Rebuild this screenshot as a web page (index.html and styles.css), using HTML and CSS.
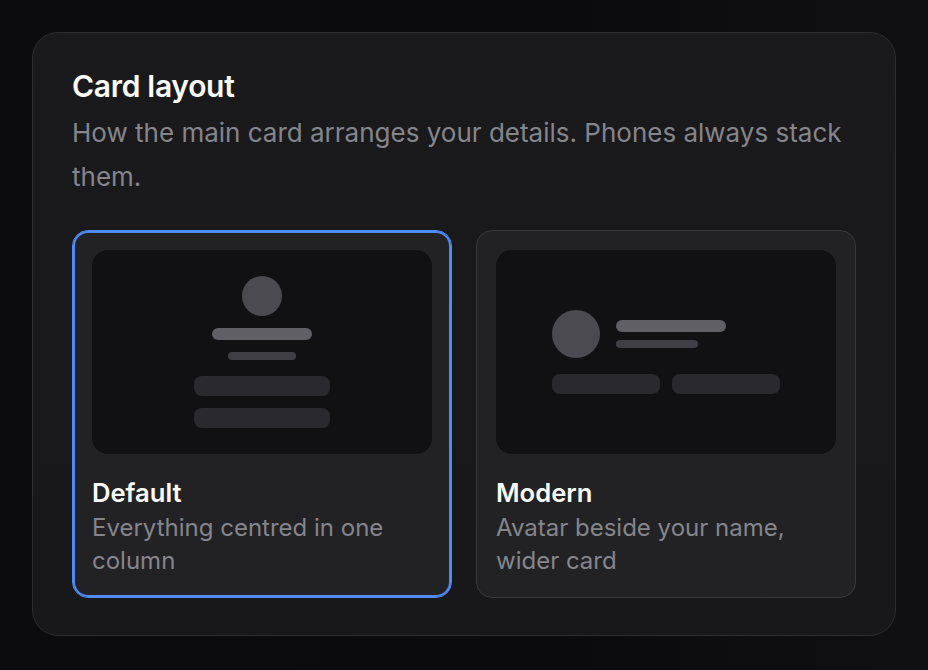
FILE: index.html
```html
<!DOCTYPE html>
<html lang="en">
<head>
<meta charset="utf-8">
<title>Card layout</title>
<link rel="stylesheet" href="styles.css">
</head>
<body>
<section class="panel">
  <h2 class="title">Card layout</h2>
  <p class="subtitle">How the main card arranges your details. Phones always stack them.</p>
  <div class="options">
    <button class="option is-selected" type="button">
      <div class="preview preview-default">
        <div class="avatar avatar-sm"></div>
        <div class="bar bar-name bar-w100"></div>
        <div class="bar bar-sub bar-w68"></div>
        <div class="bar bar-block bar-w136 mt4"></div>
        <div class="bar bar-block bar-w136"></div>
      </div>
      <div class="label">Default</div>
      <div class="desc">Everything centred in one column</div>
    </button>
    <button class="option" type="button">
      <div class="preview preview-modern">
        <div class="modern-wrap">
          <div class="modern-row">
            <div class="avatar avatar-md"></div>
            <div class="modern-text">
              <div class="bar bar-name bar-w110"></div>
              <div class="bar bar-sub bar-w82"></div>
            </div>
          </div>
          <div class="modern-buttons">
            <div class="bar bar-block bar-w108"></div>
            <div class="bar bar-block bar-w108"></div>
          </div>
        </div>
      </div>
      <div class="label">Modern</div>
      <div class="desc">Avatar beside your name, wider card</div>
    </button>
  </div>
</section>
</body>
</html>
```
FILE: styles.css
```css
* { box-sizing: border-box; }

html, body { height: 100%; }

body {
  margin: 0;
  padding: 32px;
  background: linear-gradient(90deg, #0c0c0e 0%, #0b0b0d 60%, #101012 100%);
  font-family: Inter, "Noto Sans", "Liberation Sans", sans-serif;
  color: #fafafa;
}

.panel {
  width: 864px;
  height: 604px;
  padding: 38px 39px 39px;
  border: 1px solid #2c2c31;
  border-radius: 26px;
  background: linear-gradient(180deg, #1a1a1d 0%, #18181b 100%);
}

.title {
  margin: 0;
  font-size: 30px;
  line-height: 30px;
  font-weight: 600;
  color: #fafafa;
  letter-spacing: -0.3px;
}

.subtitle {
  margin: 10px 0 0;
  font-size: 26px;
  line-height: 44px;
  color: #85858c;
}

.options {
  margin-top: 31px;
  display: grid;
  grid-template-columns: 380px 380px;
  gap: 24px;
}

.option {
  display: flex;
  flex-direction: column;
  align-items: stretch;
  text-align: left;
  padding: 19px;
  height: 368px;
  border: 1px solid #38383d;
  border-radius: 16px;
  background: #222225;
  font: inherit;
  color: inherit;
  cursor: pointer;
}

.option.is-selected {
  border-color: #4f8bf5;
  box-shadow: inset 0 0 0 2px #4f8bf5;
}

.preview {
  height: 204px;
  border-radius: 16px;
  background: #111113;
  display: flex;
  align-items: center;
  justify-content: center;
}

.preview-default {
  flex-direction: column;
  gap: 12px;
}

.avatar {
  border-radius: 50%;
  background: #4a4a50;
  flex: none;
}
.avatar-sm { width: 40px; height: 40px; }
.avatar-md { width: 48px; height: 48px; }

.bar { border-radius: 999px; flex: none; }
.bar-name { height: 12px; background: #5f5f65; }
.bar-sub { height: 8px; background: #3f3f45; }
.bar-block { height: 20px; border-radius: 8px; background: #2a2a2e; }

.bar-w100 { width: 100px; }
.bar-w68 { width: 68px; }
.bar-w136 { width: 136px; }
.bar-w110 { width: 110px; }
.bar-w82 { width: 82px; }
.bar-w108 { width: 108px; }

.mt4 { margin-top: 4px; }

.modern-wrap {
  display: flex;
  flex-direction: column;
  gap: 16px;
}

.modern-row {
  display: flex;
  align-items: center;
  gap: 16px;
}

.modern-text {
  display: flex;
  flex-direction: column;
  gap: 8px;
}

.modern-buttons {
  display: flex;
  gap: 12px;
}

.label {
  margin-top: 23px;
  font-size: 25.6px;
  line-height: 32px;
  font-weight: 600;
  color: #fafafa;
}

.desc {
  margin-top: 2px;
  font-size: 24px;
  line-height: 33.6px;
  color: #85858c;
}
```
